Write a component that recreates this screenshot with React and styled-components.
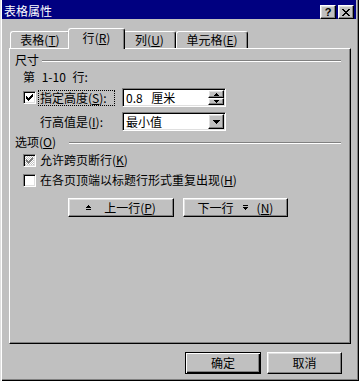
import React from 'react'
import styled, { createGlobalStyle } from 'styled-components'

const GlobalStyle = createGlobalStyle`
  html, body { margin: 0; padding: 0; background: #c0c0c0; }
  body {
    font-family: "Noto Sans CJK SC", "Liberation Sans", sans-serif;
    font-size: 12px;
    line-height: 14px;
    color: #000;
  }
  * { box-sizing: border-box; }
`

const Window = styled('div')`
  width: 359px;
  height: 381px;
  background: #c0c0c0;
  box-shadow: inset 1px 0 #dfdfdf, inset 2px 0 #fff, inset -1px -1px #000, inset -2px -2px #808080;
  overflow: hidden;
`

const TitleBar = styled('div')`
  height: 19px;
  margin: 0 3px 0 2px;
  padding: 0 2px;
  background: #000080;
  color: #fff;
  display: flex;
  align-items: flex-end;
`

const TitleText = styled('div')`
  line-height: 14px;
  padding-bottom: 1px;
  flex: 1;
`

const TitleButtons = styled('div')`
  display: flex;
  gap: 2px;
`

const RaisedBox = styled('div')`
  background: #c0c0c0;
  border: 1px solid;
  border-color: #fff #000 #000 #fff;
  box-shadow: inset -1px -1px #808080, inset 1px 1px #dfdfdf;
  display: flex;
  align-items: center;
  justify-content: center;
`

const TitleButton = styled(RaisedBox)`
  width: 16px;
  height: 14px;
  color: #000;
  font-family: "Liberation Sans", sans-serif;
  font-weight: bold;
  font-size: 11px;
  line-height: 12px;
`

const TabRow = styled('div')`
  display: flex;
  align-items: flex-end;
  height: 20px;
  margin-top: 9px;
  padding-left: 10px;
  position: relative;
  z-index: 1;
`

const Tab = styled('div')`
  width: ${p => p.$w}px;
  height: ${p => (p.$active ? 21 : 17)}px;
  margin: 0 ${p => (p.$active ? -2 : 0)}px ${p => (p.$active ? -1 : 0)}px ${p => (p.$active ? -2 : 0)}px;
  padding-top: ${p => (p.$active ? 2 : 1)}px;
  position: relative;
  z-index: ${p => (p.$active ? 2 : 1)};
  background: #c0c0c0;
  border-top: 1px solid #fff;
  border-left: 1px solid #fff;
  border-right: 1px solid #000;
  border-radius: 3px 3px 0 0;
  box-shadow: inset -1px 0 #808080;
  display: flex;
  justify-content: center;
  white-space: nowrap;
`

const Panel = styled('div')`
  margin-left: 9px;
  width: 342px;
  height: 296px;
  border: 1px solid;
  border-color: #fff #000 #000 #fff;
  box-shadow: inset -1px -1px #808080;
  padding: 4px 0 0 5px;
`

const GroupHeader = styled('div')`
  display: flex;
  align-items: flex-start;
  height: 14px;
  margin-top: ${p => p.$mt || 0}px;
`

const GroupRule = styled('div')`
  flex: 1;
  height: 2px;
  border-top: 1px solid #808080;
  border-bottom: 1px solid #fff;
  margin: 7px 9px 0 ${p => p.$gap}px;
`

const PlainRow = styled('div')`
  height: 14px;
  margin: ${p => p.$mt}px 0 0 8px;
  white-space: nowrap;
  word-spacing: 4px;
`

const FieldRow = styled('div')`
  display: flex;
  align-items: center;
  height: 19px;
  margin: ${p => p.$mt}px 0 0 8px;
`

const LabelCell = styled('div')`
  width: 99px;
  display: flex;
  align-items: center;
  padding-left: ${p => p.$indent || 0}px;
  white-space: nowrap;
`

const FocusLabel = styled('span')`
  width: 77px;
  margin-left: 2px;
  padding: 0 1px;
  height: 16px;
  line-height: 14px;
  border: 1px dotted #000;
`

const Sunken = styled('div')`
  width: 104px;
  height: 19px;
  background: #fff;
  border: 1px solid;
  border-color: #808080 #fff #fff #808080;
  box-shadow: inset 1px 1px #000, inset -1px -1px #dfdfdf;
  display: flex;
  align-items: center;
  padding: 1px 1px 1px 2px;
`

const FieldText = styled('span')`
  flex: 1;
  padding-left: 1px;
  white-space: nowrap;
  word-spacing: 6px;
`

const SpinStack = styled('div')`
  display: flex;
  flex-direction: column;
  height: 15px;
`

const SpinButton = styled(RaisedBox)`
  width: 16px;
  height: ${p => p.$h}px;
`

const DropButton = styled(RaisedBox)`
  width: 16px;
  height: 15px;
`

const CheckBox = styled('div')`
  width: 13px;
  height: 13px;
  flex: none;
  border: 1px solid;
  border-color: #808080 #fff #fff #808080;
  box-shadow: inset 1px 1px #000, inset -1px -1px #dfdfdf;
  background: ${p => (p.$dim ? 'repeating-conic-gradient(#fff 0 25%, #c0c0c0 0 50%) 0 0 / 2px 2px' : '#fff')};
  display: flex;
  align-items: center;
  justify-content: center;
`

const OptionRow = styled('div')`
  display: flex;
  align-items: center;
  height: 14px;
  margin: ${p => p.$mt}px 0 0 8px;
  white-space: nowrap;
`

const OptionLabel = styled('span')`
  margin-left: 4px;
`

const NavRow = styled('div')`
  display: flex;
  gap: 9px;
  margin: 11px 0 0 53px;
`

const PushButton = styled(RaisedBox)`
  width: ${p => p.$w}px;
  height: ${p => p.$h}px;
  gap: ${p => p.$gap || 0}px;
  white-space: nowrap;
  ${p => p.$default && `
    border-color: #000;
    box-shadow: inset 1px 1px #fff, inset -1px -1px #000, inset -2px -2px #808080;
  `}
`

const Footer = styled('div')`
  display: flex;
  justify-content: flex-end;
  gap: 6px;
  margin-top: 8px;
  padding-right: 17px;
`

const Key = styled('span')`
  text-decoration: underline;
  text-underline-offset: 1px;
`

const Mn = ({ k }) => <>(<Key>{k}</Key>)</>

const CloseGlyph = () => (
  <svg width="8" height="7" viewBox="0 0 8 7" shapeRendering="crispEdges">
    {[[0, 6], [1, 5], [2, 4], [3, 3], [2, 4], [1, 5], [0, 6]].map(([a, b], y) => (
      <g key={y}>
        <rect x={a} y={y} width="2" height="1" fill="#000" />
        <rect x={b} y={y} width="2" height="1" fill="#000" />
      </g>
    ))}
  </svg>
)

const CheckGlyph = ({ color }) => (
  <svg width="7" height="7" viewBox="0 0 7 7" shapeRendering="crispEdges">
    {[2, 3, 4, 3, 2, 1, 0].map((y, x) => (
      <rect key={x} x={x} y={y} width="1" height="3" fill={color} />
    ))}
  </svg>
)

const Arrow = ({ dir, w = 7, h = 4 }) => (
  <svg width={w} height={h} viewBox={`0 0 ${w} ${h}`} shapeRendering="crispEdges">
    <polygon
      points={dir === 'up' ? `${w / 2},0 ${w},${h} 0,${h}` : `0,0 ${w},0 ${w / 2},${h}`}
      fill="#000"
    />
  </svg>
)

const RowArrow = ({ dir }) => (
  <svg width="5" height="6" viewBox="0 0 5 6" shapeRendering="crispEdges">
    {dir === 'up' ? (
      <>
        <polygon points="2.5,0 5,3 0,3" fill="#000" />
        <rect x="0" y="4" width="5" height="1" fill="#000" />
      </>
    ) : (
      <>
        <rect x="0" y="0" width="5" height="1" fill="#000" />
        <polygon points="0,2 5,2 2.5,5" fill="#000" />
      </>
    )}
  </svg>
)

export default function App() {
  return (
    <>
      <GlobalStyle />
      <Window>
        <TitleBar>
          <TitleText>表格属性</TitleText>
          <TitleButtons>
            <TitleButton>?</TitleButton>
            <TitleButton><CloseGlyph /></TitleButton>
          </TitleButtons>
        </TitleBar>

        <TabRow>
          <Tab $w={60}>表格<Mn k="T" /></Tab>
          <Tab $w={57} $active>行<Mn k="R" /></Tab>
          <Tab $w={53}>列<Mn k="U" /></Tab>
          <Tab $w={72}>单元格<Mn k="E" /></Tab>
        </TabRow>

        <Panel>
          <GroupHeader>
            尺寸
            <GroupRule $gap={3} />
          </GroupHeader>
          <PlainRow $mt={3}>第 1-10 行:</PlainRow>

          <FieldRow $mt={4}>
            <LabelCell>
              <CheckBox><CheckGlyph color="#000" /></CheckBox>
              <FocusLabel>指定高度<Mn k="S" />:</FocusLabel>
            </LabelCell>
            <Sunken>
              <FieldText>0.8 厘米</FieldText>
              <SpinStack>
                <SpinButton $h={8}><Arrow dir="up" w={5} h={3} /></SpinButton>
                <SpinButton $h={7}><Arrow dir="down" w={5} h={3} /></SpinButton>
              </SpinStack>
            </Sunken>
          </FieldRow>

          <FieldRow $mt={5}>
            <LabelCell $indent={17}>行高值是<Mn k="I" />:</LabelCell>
            <Sunken>
              <FieldText>最小值</FieldText>
              <DropButton><Arrow dir="down" /></DropButton>
            </Sunken>
          </FieldRow>

          <GroupHeader $mt={4}>
            选项<Mn k="O" />
            <GroupRule $gap={13} />
          </GroupHeader>

          <OptionRow $mt={4}>
            <CheckBox $dim><CheckGlyph color="#808080" /></CheckBox>
            <OptionLabel>允许跨页断行<Mn k="K" /></OptionLabel>
          </OptionRow>
          <OptionRow $mt={6}>
            <CheckBox />
            <OptionLabel>在各页顶端以标题行形式重复出现<Mn k="H" /></OptionLabel>
          </OptionRow>

          <NavRow>
            <PushButton $w={106} $h={19} $gap={13}>
              <RowArrow dir="up" />
              <span>上一行<Mn k="P" /></span>
            </PushButton>
            <PushButton $w={105} $h={19} $gap={9}>
              <span>下一行</span>
              <RowArrow dir="down" />
              <span><Mn k="N" /></span>
            </PushButton>
          </NavRow>
        </Panel>

        <Footer>
          <PushButton $w={76} $h={22} $default>确定</PushButton>
          <PushButton $w={75} $h={22}>取消</PushButton>
        </Footer>
      </Window>
    </>
  )
}
